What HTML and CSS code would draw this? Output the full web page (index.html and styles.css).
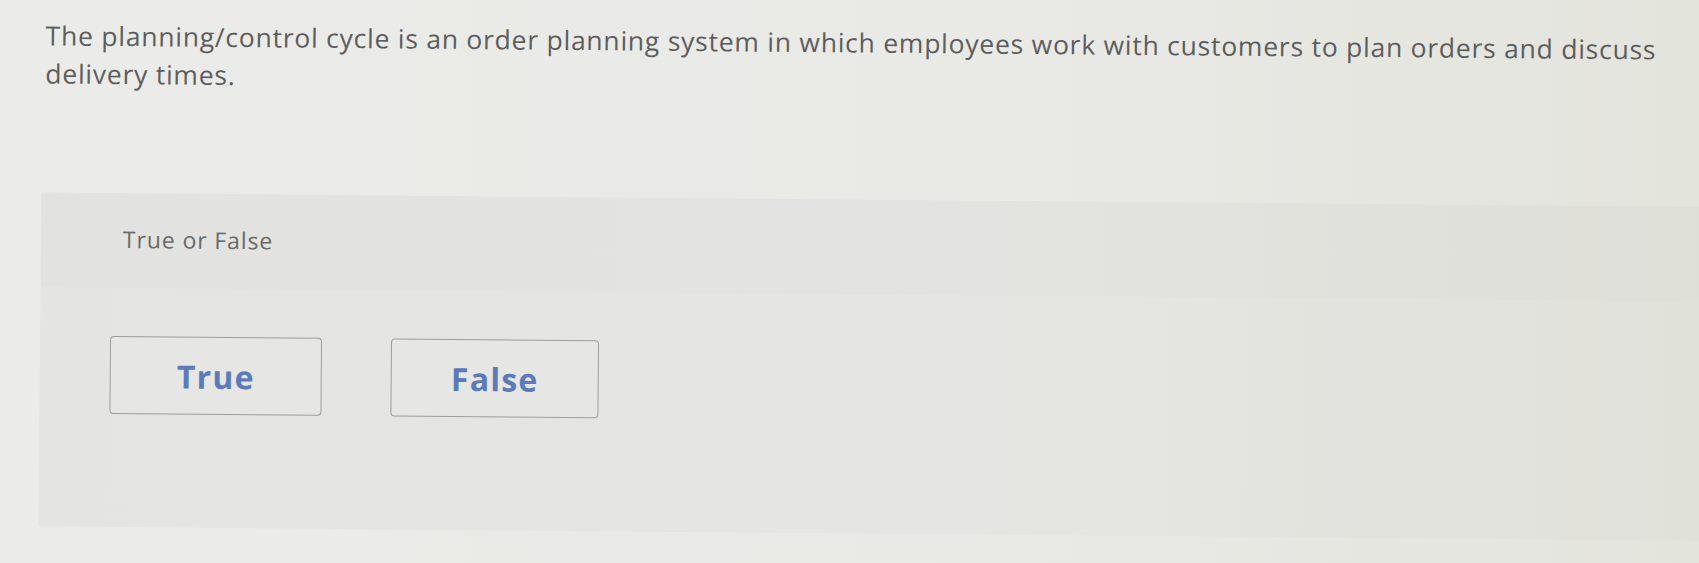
FILE: index.html
```html
<!DOCTYPE html>
<html lang="en">
<head>
  <meta charset="UTF-8" />
  <title>Question</title>
  <link rel="stylesheet" href="styles.css">
</head>
<body>
  <div class="page">

    <!-- Question prompt -->
    <p class="prompt">
      The planning/control cycle is an order planning system in which employees work with customers to plan orders and discuss delivery times.
    </p>

    <!-- Answer panel -->
    <div class="answer-panel">
      <div class="answer-head">True or False</div>
      <div class="answer-choices">
        <button class="choice-btn">True</button>
        <button class="choice-btn choice-false">False</button>
      </div>
    </div>

  </div>
</body>
</html>
```

FILE: styles.css
```css
body {
  margin: 0;
  height: 100vh;
  overflow: hidden;
  background: linear-gradient(90deg, #ebebe9 0%, #e9e9e6 60%, #e3e4dc 100%);
  font-family: 'Open Sans', 'Noto Sans', sans-serif;
  color: #5f5f5f;
}

.page {
  transform: rotate(0.5deg);
  transform-origin: 0 0;
}

.prompt {
  margin: 0;
  padding: 16px 0 0 46px;
  max-width: 1645px;
  font-size: 26.5px;
  line-height: 38px;
  letter-spacing: 0.76px;
  color: #5d5d5d;
}

.answer-panel {
  margin: 100px -20px 0 43px;
  height: 334px;
  background: linear-gradient(90deg, #e4e4e2 0%, #e5e5e2 60%, #e0e1d9 100%);
}

.answer-head {
  padding: 33px 0 0 82px;
  height: 62px;
  font-size: 23px;
  line-height: 26px;
  letter-spacing: 0.9px;
  color: #6a6a6a;
  background: rgba(0, 0, 0, 0.008);
}

.answer-choices {
  display: flex;
  gap: 69px;
  padding: 48px 0 0 70px;
}

.choice-btn {
  width: 212px;
  height: 78px;
  border: 1.5px solid #9e9e9c;
  border-radius: 4px;
  background: #e6e6e4;
  font-family: 'Open Sans', 'Noto Sans', sans-serif;
  font-weight: bold;
  font-size: 32px;
  letter-spacing: 1.2px;
  color: #5d7ab9;
  cursor: pointer;
}

.choice-false {
  width: 208px;
}
```
